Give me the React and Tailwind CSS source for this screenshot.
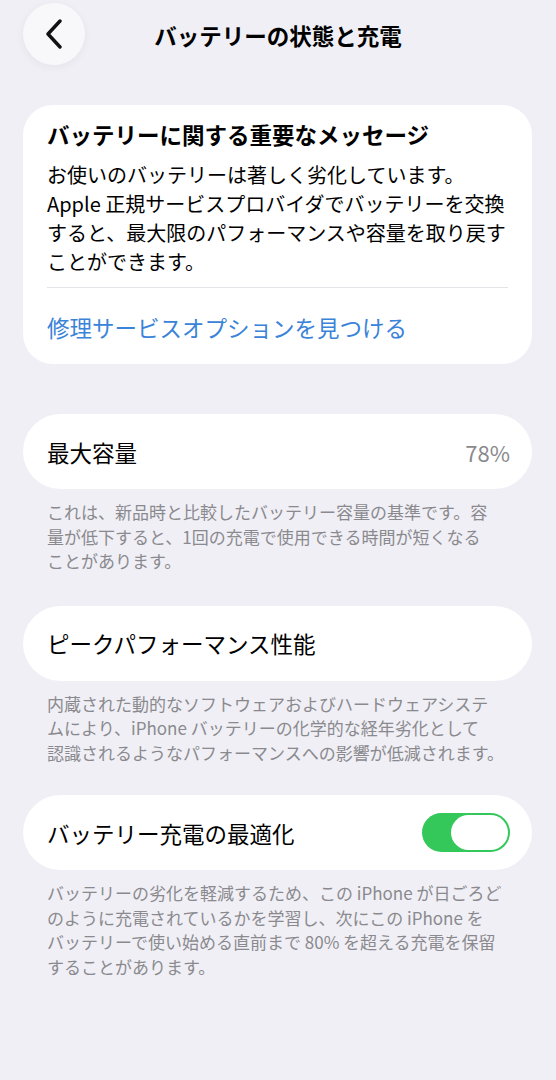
const FONT = { fontFamily: '"Noto Sans CJK JP", "Noto Sans", sans-serif' };

const Lines = ({ lines }) => (
  <>
    {lines.map((l, i) => (
      <span key={i} className="block whitespace-nowrap">
        {l}
      </span>
    ))}
  </>
);

const Footnote = ({ lines }) => (
  <div className="mt-[11px] px-6 text-[17px] leading-[24.5px] text-[#8a8a8e]">
    <Lines lines={lines} />
  </div>
);

const Row = ({ children }) => (
  <div className="flex h-[75px] items-center justify-between rounded-full bg-white pl-6 pr-[22px]">
    {children}
  </div>
);

const Toggle = () => (
  <div className="flex h-[39px] w-[88px] items-center justify-end rounded-full bg-[#34c759] p-[2px]">
    <div className="h-[35px] w-[57px] rounded-full bg-white" />
  </div>
);

export default function App() {
  return (
    <div style={FONT} className="min-h-[1080px] w-full bg-[#f0eff5] text-black">
      {/* Header */}
      <div className="relative flex h-[105px] items-start justify-center">
        <button className="absolute left-[23px] top-[3px] flex h-[62px] w-[62px] items-center justify-center rounded-full bg-[#f8f8fb] shadow-[0_2px_10px_rgba(0,0,0,0.05)]">
          <svg width="20" height="30" viewBox="0 0 20 30" fill="none">
            <path d="M16 2 L4 15 L16 28" stroke="#111" strokeWidth="3.4" strokeLinecap="round" strokeLinejoin="round" />
          </svg>
        </button>
        <h1 className="mt-[20px] text-[22.5px] font-bold leading-[30px]">バッテリーの状態と充電</h1>
      </div>

      <div className="px-[23px] pr-6">
        {/* Message card */}
        <div className="rounded-[30px] bg-white px-6 pb-[22px] pt-[14px]">
          <div className="text-[22.5px] font-bold leading-[30px]">バッテリーに関する重要なメッセージ</div>
          <div className="mt-[11px] text-[20px] leading-[29px]">
            <Lines
              lines={[
                "お使いのバッテリーは著しく劣化しています。",
                "Apple 正規サービスプロバイダでバッテリーを交換",
                "すると、最大限のパフォーマンスや容量を取り戻す",
                "ことができます。",
              ]}
            />
          </div>
          <div className="mt-[11px] h-px bg-[#e3e3e8]" />
          <div className="mt-[24px] text-[22.5px] leading-[30px] text-[#3a83d8]">修理サービスオプションを見つける</div>
        </div>

        {/* Max capacity */}
        <div className="mt-[50px]">
          <Row>
            <span className="text-[22.5px] leading-[30px]">最大容量</span>
            <span className="text-[22px] leading-[30px] text-[#8a8a8e]">78%</span>
          </Row>
          <Footnote
            lines={[
              "これは、新品時と比較したバッテリー容量の基準です。容",
              "量が低下すると、1回の充電で使用できる時間が短くなる",
              "ことがあります。",
            ]}
          />
        </div>

        {/* Peak performance */}
        <div className="mt-[32px]">
          <Row>
            <span className="text-[22.5px] leading-[30px]">ピークパフォーマンス性能</span>
          </Row>
          <Footnote
            lines={[
              "内蔵された動的なソフトウェアおよびハードウェアシステ",
              "ムにより、iPhone バッテリーの化学的な経年劣化として",
              "認識されるようなパフォーマンスへの影響が低減されます。",
            ]}
          />
        </div>

        {/* Optimized charging */}
        <div className="mt-[30px]">
          <Row>
            <span className="text-[22.5px] leading-[30px]">バッテリー充電の最適化</span>
            <Toggle />
          </Row>
          <Footnote
            lines={[
              "バッテリーの劣化を軽減するため、この iPhone が日ごろど",
              "のように充電されているかを学習し、次にこの iPhone を",
              "バッテリーで使い始める直前まで 80% を超える充電を保留",
              "することがあります。",
            ]}
          />
        </div>
      </div>
    </div>
  );
}
